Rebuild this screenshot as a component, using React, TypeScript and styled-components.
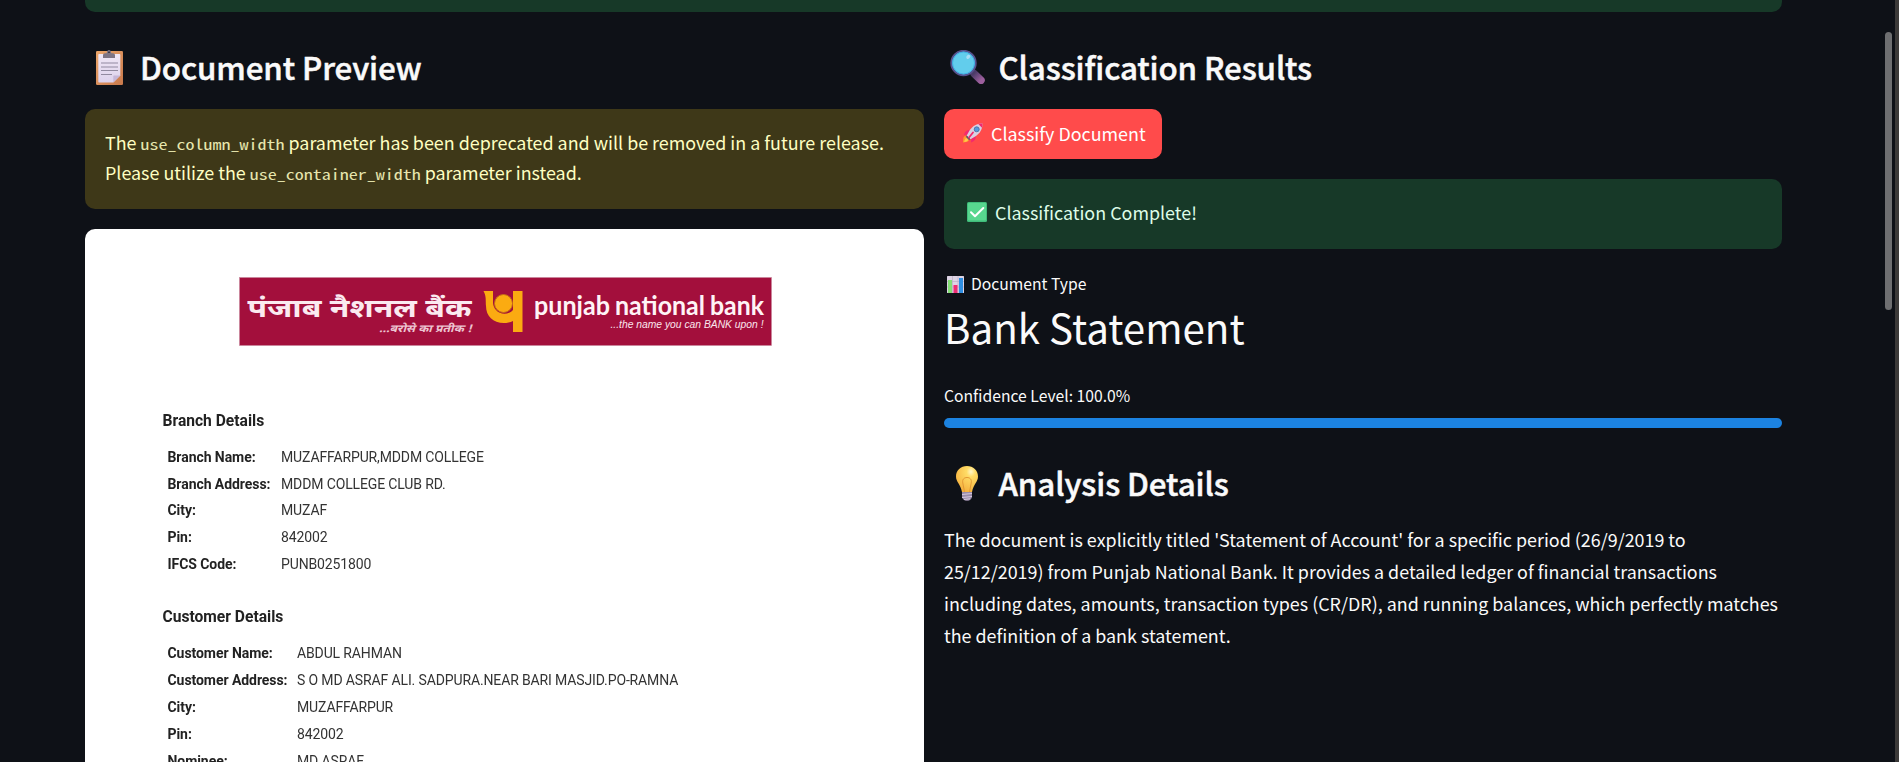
import React from "react";
import styled, { createGlobalStyle } from "styled-components";

const Global = createGlobalStyle`
  * { box-sizing: border-box; }
  html, body { margin: 0; background: #0e1117; overflow: hidden; }
`;

const sans = `"Noto Sans CJK JP", "Noto Sans", sans-serif`;
const mono = `"Noto Sans Mono CJK JP", "Liberation Mono", monospace`;

const Window = styled.div`
  display: flex;
  width: 100%;
  height: 762px;
  overflow: hidden;
  background: #0e1117;
  color: #fafafa;
  font-family: ${sans};
  font-size: 17.9px;
`;

const Page = styled.main`
  flex: 1;
  min-width: 0;
  padding: 0 103px 0 85px;
`;

const ScrollRail = styled.div`
  width: 10px;
  padding-top: 32px;
`;

const ScrollThumb = styled.div`
  width: 7px;
  height: 278px;
  border-radius: 4px;
  background: #6e6f71;
`;

const EdgeStrip = styled.div`
  width: 4px;
  background: #3c3a39;
`;

const TopAlert = styled.div`
  height: 12px;
  border-radius: 0 0 10px 10px;
  background: #173928;
`;

const Columns = styled.div`
  display: grid;
  grid-template-columns: 839px 838px;
  column-gap: 20px;
`;

const Column = styled.section`
  display: flex;
  flex-direction: column;
  min-width: 0;
`;

const Heading = styled.h3`
  display: flex;
  align-items: center;
  height: 42px;
  margin: 34px 0 0;
  font-size: 31.3px;
  font-weight: 500;
  letter-spacing: -0.1px;
  -webkit-text-stroke: 0.5px currentColor;
  line-height: 42px;
  white-space: nowrap;
`;

const Icon = styled.svg<{ $w: number; $h: number; $l: number; $r: number }>`
  flex: none;
  width: ${(p) => p.$w}px;
  height: ${(p) => p.$h}px;
  margin: 0 ${(p) => p.$r}px 0 ${(p) => p.$l}px;
`;

const Alert = styled.div<{ $kind: "warning" | "success" }>`
  display: flex;
  flex-direction: column;
  justify-content: center;
  height: ${(p) => (p.$kind === "warning" ? 100 : 70)}px;
  margin-top: ${(p) => (p.$kind === "warning" ? 21 : 20)}px;
  padding: 0 20px 4px;
  border-radius: 10px;
  line-height: 30px;
  white-space: nowrap;
  background: ${(p) => (p.$kind === "warning" ? "#3e3818" : "#173928")};
  color: ${(p) => (p.$kind === "warning" ? "#ffffc2" : "#dffde9")};
`;

const Line = styled.div`
  display: flex;
  align-items: center;
  height: 30px;
`;

const Code = styled.code`
  display: inline-block;
  height: 30px;
  font-family: ${mono};
  font-size: 18px;
  font-weight: 400;
  line-height: 30px;
  opacity: 0.88;
  transform: scaleY(0.82);
  transform-origin: 0 74%;
`;

const Button = styled.button`
  display: flex;
  align-items: center;
  width: 218px;
  height: 50px;
  margin-top: 21px;
  padding: 0 0 3px;
  border: 0;
  border-radius: 10px;
  background: #ff4b4b;
  color: #fff;
  font: 400 17.9px/30px ${sans};
  white-space: nowrap;
`;

const MetricLabel = styled.div`
  display: flex;
  align-items: center;
  height: 26px;
  margin-top: 22px;
  font-size: 15.7px;
  line-height: 26px;
`;

const MetricValue = styled.div`
  height: 56px;
  font-size: 40.3px;
  line-height: 59px;
  white-space: nowrap;
`;

const ProgressLabel = styled.div`
  height: 26px;
  margin-top: 30px;
  font-size: 15.7px;
  line-height: 26px;
`;

const ProgressBar = styled.div`
  height: 10px;
  margin-top: 9px;
  border-radius: 5px;
  background: #1c83e1;
`;

const Paragraph = styled.p`
  margin: 19px 0 0;
  line-height: 32px;
  white-space: nowrap;
`;

const Scan = styled.div`
  height: 533px;
  margin-top: 20px;
  overflow: hidden;
  border-radius: 10px 10px 0 0;
  background: #fff;
  color: #222;
  font-family: Roboto, sans-serif;
`;

const ScanBody = styled.div`
  display: flex;
  flex-direction: column;
  padding: 48px 0 0 77.5px;
  filter: blur(0.35px);
`;

const Banner = styled.svg`
  display: block;
  width: 533px;
  height: 69px;
  margin-left: 76.5px;
`;

const ScanTitle = styled.div<{ $top: number }>`
  height: 24px;
  margin-top: ${(p) => p.$top}px;
  font-size: 15.6px;
  font-weight: 700;
  line-height: 24px;
`;

const ScanTable = styled.div<{ $label: number; $top: number }>`
  display: grid;
  grid-template-columns: ${(p) => p.$label}px auto;
  grid-auto-rows: 26.8px;
  margin: ${(p) => p.$top}px 0 0 5px;
  font-size: 14px;
  line-height: 26.8px;
  white-space: nowrap;
`;

const ScanLabel = styled.span`
  font-weight: 700;
  letter-spacing: -0.06px;
`;

const ScanValue = styled.span`
  color: #333;
  letter-spacing: -0.13px;
`;

const Clipboard = () => (
  <Icon viewBox="0 0 27 35" $w={27} $h={35} $l={11} $r={17}>
    <defs>
      <linearGradient id="board" x1="0" y1="0" x2="1" y2="1">
        <stop offset="0" stopColor="#eba66b" />
        <stop offset="1" stopColor="#c8794c" />
      </linearGradient>
      <linearGradient id="sheet" x1="0" y1="0" x2="0" y2="1">
        <stop offset="0" stopColor="#efe6f5" />
        <stop offset="1" stopColor="#ddd2ec" />
      </linearGradient>
    </defs>
    <rect y="1" width="27" height="34" rx="1.2" fill="url(#board)" />
    <path d="M3.3 4h20c.6 0 1 .4 1 1v20.500l-7 7H3.300c-.6 0-1-.4-1-1V5c0-.6.400-1 1-1z" fill="url(#sheet)" />
    <path d="M17.300 32.500v-6c0-.6.400-1 1-1h6z" fill="#c6b6d8" />
    <path d="M7 8V5.300c0-1.200.9-2 2-2h1.700C11 1 11.800 0 13 0s2 1 2.300 3.300H17c1.100 0 2 .8 2 2V8z" fill="#7e7484" />
    <circle cx="13" cy="2.300" r=".8" fill="#1b1a22" />
    <path d="M5 13h17M5 17h17M5 20.500h17M5 24.500h11" stroke="#9189a0" strokeWidth="1" />
  </Icon>
);

const Magnifier = () => (
  <Icon viewBox="0 0 35 34" $w={35} $h={34} $l={6} $r={13.5}>
    <defs>
      <linearGradient id="handle" x1="0" y1="0" x2="1" y2="1">
        <stop offset="0" stopColor="#4b3b68" />
        <stop offset="1" stopColor="#9c5f9d" />
      </linearGradient>
    </defs>
    <path d="M24 23.500l7 6.800" stroke="url(#handle)" strokeWidth="7.500" strokeLinecap="round" />
    <circle cx="13.500" cy="13" r="12.200" fill="#62cdec" stroke="#57528e" strokeWidth="2" />
    <circle cx="13.500" cy="13" r="11" fill="none" stroke="#3fb0e4" strokeWidth="1" />
    <ellipse cx="18.300" cy="6.800" rx="2.300" ry="1.700" transform="rotate(-45 18.300 6.800)" fill="#a9ddf4" />
  </Icon>
);

const Bulb = () => (
  <Icon viewBox="0 0 22 35" $w={22} $h={35} $l={12} $r={20.5}>
    <defs>
      <radialGradient id="glass" cx=".68" cy=".22" r=".8">
        <stop offset="0" stopColor="#fff6c9" />
        <stop offset=".25" stopColor="#ffdc66" />
        <stop offset="1" stopColor="#f5b23f" />
      </radialGradient>
    </defs>
    <path d="M11 0C4.700 0 0 4.600 0 10.500c0 5.500 4.500 7.500 6 15.500h10c1.500-8 6-10 6-15.500C22 4.600 17.300 0 11 0z" fill="url(#glass)" />
    <path d="M8.500 26l-1.700-9c-.8-3.500 1.200-5.500 4.200-5.500s5 2 4.200 5.500l-1.700 9" fill="none" stroke="#e49a35" strokeWidth="1" />
    <path d="M6 26h10v4.500c0 2-2 4.300-5 4.300s-5-2.300-5-4.300z" fill="#998ba8" />
    <path d="M6 28.500l10-1M6 31.500l10-1M8 33.500l6-.7" stroke="#d5c8df" strokeWidth="1" />
  </Icon>
);

const Rocket = () => (
  <Icon viewBox="0 0 20 20" $w={20} $h={20} $l={19} $r={8}>
    <path d="M1 13.500c2-1 4 .200 5 2 .7 2-1 3.800-6 4 .2-2.500.2-4.800 1-6z" fill="#ff9a2e" />
    <path d="M2.500 15.500c1.500-.7 2.800.500 2.300 2-.600.900-1.800 1.200-3.800 1.300z" fill="#ffca4d" />
    <path d="M6.800 6.800C3.500 7 1.800 8.800 1 12l4.500-.5zM13 13c-.1 3.500-2 5.500-5 6.500l.5-4.800z" fill="#f3286f" />
    <path d="M19.500.5c-6 0-9.500 2.300-12.500 6.300L3.700 12.500l3.800 3.800L13 13c4-3.200 6.500-6.500 6.500-12.500z" fill="#d9d0e2" />
    <path d="M19.500.500c-1.500 0-3 .1-4.200.5L19 4.700c.4-1.300.5-2.700.5-4.200z" fill="#f3286f" />
    <path d="M3.700 12.500l3.800 3.800-1.500.7-3-3z" fill="#505b79" />
    <path d="M10 9.500l-4 5" stroke="#f3286f" strokeWidth="1.800" strokeLinecap="round" />
    <circle cx="13.700" cy="6.300" r="2.500" fill="#559bdd" stroke="#466a9c" strokeWidth=".8" />
  </Icon>
);

const CheckMark = () => (
  <Icon viewBox="0 0 20 20" $w={20} $h={20} $l={3} $r={8}>
    <rect width="20" height="20" rx="1.500" fill="#40bd7b" />
    <rect x="1" y="1" width="18" height="17.500" rx="1" fill="#58d78f" />
    <path d="M4 10.300l4 4L16.300 6" fill="none" stroke="#fff" strokeWidth="2" strokeLinecap="round" strokeLinejoin="round" />
  </Icon>
);

const Chart = () => (
  <Icon viewBox="0 0 17 17" $w={17} $h={17} $l={3} $r={7}>
    <rect width="17" height="17" rx=".5" fill="#ddd4e5" />
    <path d="M0 5.500h17M0 11h17M5.500 0v17M11 0v17" stroke="#bbb0c6" strokeWidth=".7" />
    <rect x="1" y="4" width="4" height="13" fill="#83dd74" />
    <rect x="6.500" y="9" width="4" height="8" fill="#ee2c72" />
    <rect x="12" y="2" width="4" height="15" fill="#2f8fe2" />
  </Icon>
);

const devanagari = '"Noto Sans Devanagari", "Noto Sans", sans-serif';

const BankBanner = () => (
  <Banner viewBox="0 0 533 69">
    <rect x=".5" y=".5" width="532" height="68" fill="#a30f3c" stroke="#c8889c" strokeWidth=".6" />
    <text x="8.500" y="40" fill="#fbeaf0" fontFamily={devanagari} fontWeight="700" fontSize="25" textLength="224" lengthAdjust="spacingAndGlyphs">पंजाब नैशनल बैंक</text>
    <text x="140" y="55" fill="#edc4d1" fontFamily={devanagari} fontStyle="italic" fontWeight="700" fontSize="10.500" textLength="93" lengthAdjust="spacingAndGlyphs">...बरोसे का प्रतीक !</text>
    <path d="M244.500 14h9.500v11a11.500 11.500 0 0 0 3 8 11.500 11.500 0 0 0 17 0V14h9.500v41h-9.500V44c-3 1.500-6 2-9 2-11 0-18-7-18-17-.5-5 .5-10-2.500-15z" fill="#fbab11" />
    <circle cx="264.500" cy="26.500" r="9" fill="#fbab11" stroke="#c46c17" strokeWidth="1" />
    <g fill="#fff3f6" fontFamily="Lato, sans-serif" fontWeight="700" fontSize="27.500">
      <text x="295" y="38" textLength="76" lengthAdjust="spacingAndGlyphs">punjab</text>
      <text x="376" y="38" textLength="90" lengthAdjust="spacingAndGlyphs">national</text>
      <text x="471" y="38" textLength="54" lengthAdjust="spacingAndGlyphs">bank</text>
    </g>
    <text x="371.500" y="51" fill="#fbe6ed" fontFamily='"Liberation Sans", sans-serif' fontStyle="italic" fontSize="11.300" textLength="153" lengthAdjust="spacingAndGlyphs">...the name you can BANK upon !</text>
  </Banner>
);

const branch = [
  ["Branch Name:", "MUZAFFARPUR,MDDM COLLEGE"],
  ["Branch Address:", "MDDM COLLEGE CLUB RD."],
  ["City:", "MUZAF"],
  ["Pin:", "842002"],
  ["IFCS Code:", "PUNB0251800"],
];

const customer = [
  ["Customer Name:", "ABDUL RAHMAN"],
  ["Customer Address:", "S O MD ASRAF ALI. SADPURA.NEAR BARI MASJID.PO-RAMNA"],
  ["City:", "MUZAFFARPUR"],
  ["Pin:", "842002"],
  ["Nominee:", "MD ASRAF"],
];

const Details = ({ rows, label, top }: { rows: string[][]; label: number; top: number }) => (
  <ScanTable $label={label} $top={top}>
    {rows.map(([name, value]) => (
      <React.Fragment key={name}>
        <ScanLabel>{name}</ScanLabel>
        <ScanValue>{value}</ScanValue>
      </React.Fragment>
    ))}
  </ScanTable>
);

export default function App() {
  return (
    <>
      <Global />
      <Window>
        <Page>
          <TopAlert />
          <Columns>
            <Column>
              <Heading><Clipboard />Document Preview</Heading>
              <Alert $kind="warning">
                <div>The <Code>use_column_width</Code> parameter has been deprecated and will be removed in a future release.</div>
                <div>Please utilize the <Code>use_container_width</Code> parameter instead.</div>
              </Alert>
              <Scan>
                <ScanBody>
                  <BankBanner />
                  <ScanTitle $top={62.5}>Branch Details</ScanTitle>
                  <Details rows={branch} label={113.5} top={11.3} />
                  <ScanTitle $top={27.5}>Customer Details</ScanTitle>
                  <Details rows={customer} label={129.5} top={11.2} />
                </ScanBody>
              </Scan>
            </Column>
            <Column>
              <Heading><Magnifier />Classification Results</Heading>
              <Button><Rocket />Classify Document</Button>
              <Alert $kind="success">
                <Line><CheckMark />Classification Complete!</Line>
              </Alert>
              <MetricLabel><Chart />Document Type</MetricLabel>
              <MetricValue>Bank Statement</MetricValue>
              <ProgressLabel>Confidence Level: 100.0%</ProgressLabel>
              <ProgressBar />
              <Heading><Bulb />Analysis Details</Heading>
              <Paragraph>
                The document is explicitly titled 'Statement of Account' for a specific period (26/9/2019 to<br />
                25/12/2019) from Punjab National Bank. It provides a detailed ledger of financial transactions<br />
                including dates, amounts, transaction types (CR/DR), and running balances, which perfectly matches<br />
                the definition of a bank statement.
              </Paragraph>
            </Column>
          </Columns>
        </Page>
        <ScrollRail><ScrollThumb /></ScrollRail>
        <EdgeStrip />
      </Window>
    </>
  );
}
